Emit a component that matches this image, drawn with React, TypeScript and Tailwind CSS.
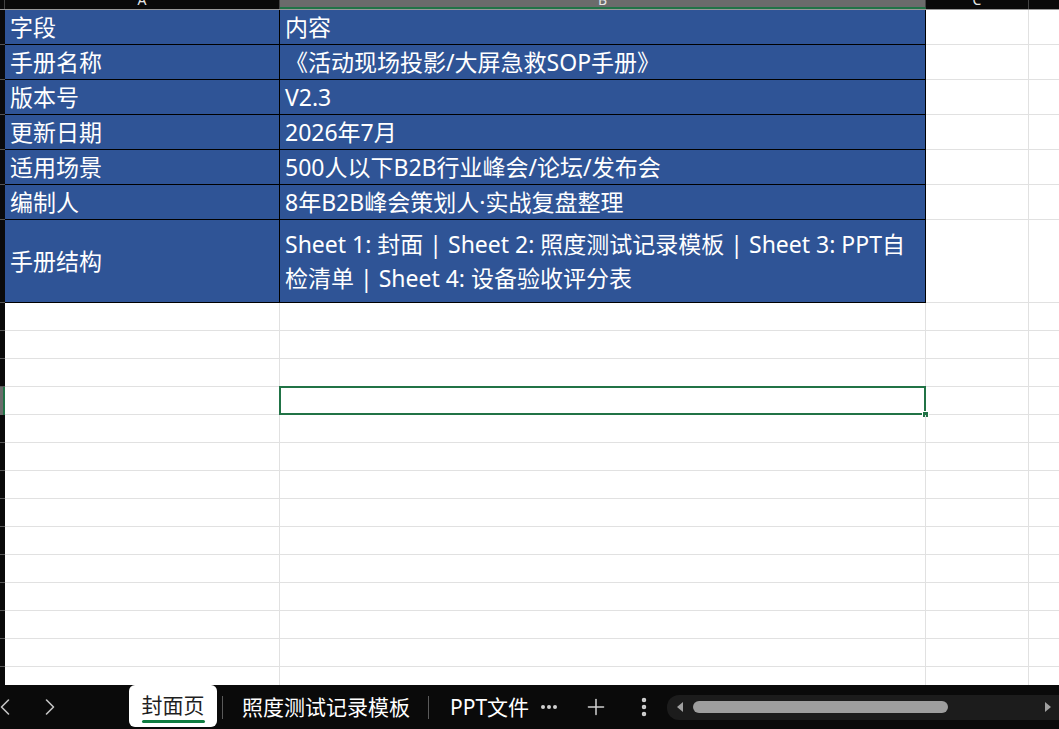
import { ChevronLeft, ChevronRight, Plus, MoreVertical } from 'lucide-react';

const FONT = { fontFamily: '"Noto Sans", "Noto Sans CJK SC", sans-serif' };

const rows: { label: string; value: string[]; tall?: boolean }[] = [
  { label: '字段', value: ['内容'] },
  { label: '手册名称', value: ['《活动现场投影/大屏急救SOP手册》'] },
  { label: '版本号', value: ['V2.3'] },
  { label: '更新日期', value: ['2026年7月'] },
  { label: '适用场景', value: ['500人以下B2B行业峰会/论坛/发布会'] },
  { label: '编制人', value: ['8年B2B峰会策划人·实战复盘整理'] },
  {
    label: '手册结构',
    value: ['Sheet 1: 封面 | Sheet 2: 照度测试记录模板 | Sheet 3: PPT自', '检清单 | Sheet 4: 设备验收评分表'],
    tall: true,
  },
];

const EMPTY_ROWS = 14;
const SELECTED = 3;

// 表头 (只露出字母底部)
const ColumnHeader = () => (
  <div className="flex shrink-0 h-[10px] bg-[#0a0a0a] border-b border-[#9a9a9a] text-[#e6e6e6] text-[14px] leading-none overflow-hidden">
    <div className="w-[5px] shrink-0 border-r border-[#444]" />
    <div className="w-[275px] shrink-0 flex justify-center border-r border-[#444]">
      <span className="-mt-[7px]">A</span>
    </div>
    <div className="w-[646px] shrink-0 flex justify-center bg-[#6b6b6b] border-r border-[#444] border-b-2 border-b-[#217346]">
      <span className="-mt-[7px]">B</span>
    </div>
    <div className="w-[103px] shrink-0 flex justify-center border-r border-[#444]">
      <span className="-mt-[7px]">C</span>
    </div>
    <div className="flex-1" />
  </div>
);

const DataRow = ({ label, value, tall }: { label: string; value: string[]; tall?: boolean }) => (
  <div className={`flex shrink-0 ${tall ? 'h-[83px]' : 'h-[35px]'}`}>
    <div className="w-[5px] shrink-0 bg-[#0a0a0a] border-b border-[#555]" />
    <div className="w-[275px] shrink-0 bg-[#2f5496] border-r border-b border-black text-white text-[23px] flex items-center pl-[5px]">
      {label}
    </div>
    <div className="w-[646px] shrink-0 bg-[#2f5496] border-r border-b border-black text-white text-[23px] flex flex-col justify-center pl-[5px] leading-[34px] whitespace-nowrap overflow-hidden">
      {value.map((line) => (
        <span key={line}>{line}</span>
      ))}
    </div>
    <div className="w-[103px] shrink-0 border-r border-b border-[#e1e1e1]" />
    <div className="flex-1 border-b border-[#e1e1e1]" />
  </div>
);

const EmptyRow = ({ selected }: { selected: boolean }) => (
  <div className="flex shrink-0 h-[28px]">
    <div
      className={
        selected
          ? 'w-[5px] shrink-0 bg-[#6b6b6b] border-r-2 border-[#217346]'
          : 'w-[5px] shrink-0 bg-[#0a0a0a] border-b border-[#555]'
      }
    />
    <div className="w-[275px] shrink-0 border-r border-b border-[#e1e1e1]" />
    <div className="w-[646px] shrink-0 border-r border-b border-[#e1e1e1] relative">
      {selected && (
        <>
          <div className="absolute -left-px -top-px -right-px -bottom-px border-2 border-[#217346]" />
          <div className="absolute -right-[4px] -bottom-[4px] w-[7px] h-[7px] bg-[#217346] border border-white" />
        </>
      )}
    </div>
    <div className="w-[103px] shrink-0 border-r border-b border-[#e1e1e1]" />
    <div className="flex-1 border-b border-[#e1e1e1]" />
  </div>
);

const SheetTabs = () => (
  <div className="h-[44px] shrink-0 bg-[#0a0a0a] flex items-center text-[21px] text-white">
    <div className="w-[129px] shrink-0 flex items-center h-full text-[#c4c4c4]">
      <ChevronLeft className="w-[28px] h-[28px] -ml-[9px]" strokeWidth={1.4} />
      <ChevronRight className="w-[28px] h-[28px] ml-[17px]" strokeWidth={1.4} />
    </div>
    <div className="w-[88px] h-[42px] self-start bg-white rounded-[6px] flex flex-col items-center justify-center text-[#1f1f1f]">
      <span className="leading-[26px] mt-[2px]">封面页</span>
      <div className="w-[63px] h-[3px] bg-[#107c41] mt-[2px] rounded-full" />
    </div>
    <div className="w-px h-[23px] bg-[#5a5a5a] ml-[5px]" />
    <span className="ml-[19px] leading-none">照度测试记录模板</span>
    <div className="w-px h-[23px] bg-[#5a5a5a] ml-[18px]" />
    <span className="ml-[21px] leading-none">PPT文件</span>
    <div className="ml-[12px] flex gap-[2px]">
      <div className="w-[4px] h-[4px] rounded-full bg-[#d0d0d0]" />
      <div className="w-[4px] h-[4px] rounded-full bg-[#d0d0d0]" />
      <div className="w-[4px] h-[4px] rounded-full bg-[#d0d0d0]" />
    </div>
    <Plus className="w-[26px] h-[26px] ml-[26px] text-[#d0d0d0]" strokeWidth={1.4} />
    <MoreVertical className="w-[24px] h-[24px] ml-[23px] text-[#d0d0d0]" strokeWidth={2.5} />
    <div className="ml-[11px] flex-1 h-[25px] bg-[#1c1c1c] rounded-l-[12px] flex items-center">
      <svg width="10" height="12" viewBox="0 0 10 12" className="ml-[8px]">
        <path d="M8 1 L2 6 L8 11 Z" fill="#a0a0a0" />
      </svg>
      <div className="ml-[8px] w-[255px] h-[12px] bg-[#9e9e9e] rounded-full" />
      <div className="flex-1" />
      <svg width="10" height="12" viewBox="0 0 10 12" className="mr-[6px]">
        <path d="M2 1 L8 6 L2 11 Z" fill="#a0a0a0" />
      </svg>
    </div>
  </div>
);

export default function App() {
  return (
    <div className="w-[1059px] h-[729px] flex flex-col bg-white overflow-hidden" style={FONT}>
      <div className="h-[685px] shrink-0 overflow-hidden flex flex-col">
        <ColumnHeader />
        {rows.map((r) => (
          <DataRow key={r.label} {...r} />
        ))}
        {Array.from({ length: EMPTY_ROWS }).map((_, i) => (
          <EmptyRow key={i} selected={i === SELECTED} />
        ))}
      </div>
      <SheetTabs />
    </div>
  );
}
